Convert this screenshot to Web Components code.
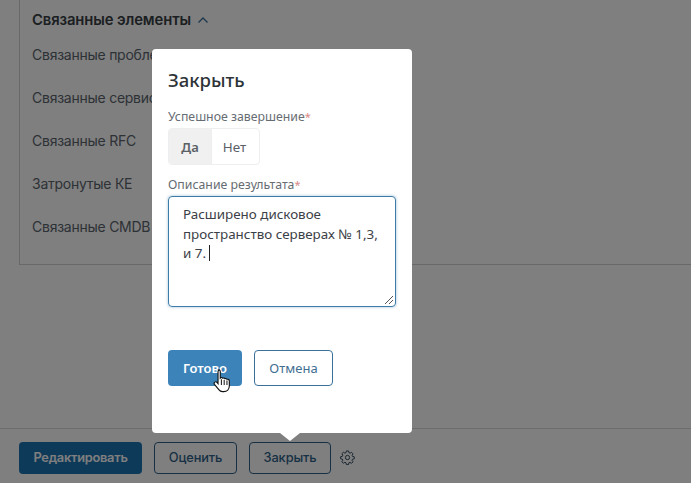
<!DOCTYPE html>
<html lang="ru"><head><meta charset="utf-8">
<style>
html,body{margin:0;padding:0;width:691px;height:483px;overflow:hidden;background:#fff}
body{font-family:Inter,"Liberation Sans",sans-serif}
</style></head><body>
<app-page>
  <related-panel title-text="Связанные элементы">
    <span>Связанные проблемы</span><span>Связанные сервисы</span><span>Связанные RFC</span><span>Затронутые КЕ</span><span>Связанные CMDB</span>
  </related-panel>
  <action-bar slot="footer">
    <ui-button variant="dark" w="123">Редактировать</ui-button>
    <ui-button variant="outline" w="83">Оценить</ui-button>
    <ui-button variant="outline" w="82">Закрыть</ui-button>
    <svg width="15" height="15" viewBox="0 0 24 24" fill="none" stroke="#2b4358" stroke-width="1.5" stroke-linejoin="round"><path d="M10.3 2.500h3.400l.6 2.800 1.700.8 2.500-1.400 2.300 2.400-1.500 2.400.7 1.800 2.800.6v3.300l-2.800.6-.8 1.700 1.600 2.400-2.400 2.400-2.400-1.500-1.800.7-.6 2.800h-3.400l-.6-2.800-1.800-.8-2.400 1.500-2.400-2.400 1.500-2.400-.7-1.700-2.800-.6v-3.400l2.800-.6.7-1.800-1.500-2.400 2.400-2.300 2.400 1.400 1.800-.8z" transform="translate(0 -1)"/><circle cx="12" cy="12" r="3.400"/></svg>
  </action-bar>
  <close-dialog slot="overlay"></close-dialog>
</app-page>
<script>
function def(name,css,html,init){
  customElements.define(name,class extends HTMLElement{
    constructor(){super();this.attachShadow({mode:'open'}).innerHTML='<style>'+css+'</style>'+html;}
    connectedCallback(){init&&init(this);}
  });
}
def('app-page',`
:host{display:flex;flex-direction:column;width:691px;height:483px;position:relative;overflow:hidden;background:#fff}
main{flex:1;padding:0 0 0 19px;min-height:0}
.scrim{position:absolute;inset:0;background:rgba(0,0,0,.5)}
.top{position:absolute;inset:0}
`,`<main><slot></slot></main><slot name="footer"></slot><div class="scrim"></div><div class="top"><slot name="overlay"></slot></div>`);

def('related-panel',`
:host{display:block;width:672px;height:265px;box-sizing:border-box;border-left:1px solid #cfd3d6;border-bottom:1px solid #cfd3d6;padding:10px 0 0 12px;font-family:Inter,"Liberation Sans",sans-serif}
h2{margin:0 0 15px;display:flex;align-items:center;gap:6px;font-size:14.800px;line-height:20px;font-weight:600;color:#383e44;letter-spacing:-.1px}
.list{display:flex;flex-direction:column;gap:23px}
::slotted(span){display:block;font-size:14px;line-height:20px;color:#5b646d;letter-spacing:-.25px;white-space:nowrap}
`,`<h2></h2><div class="list"><slot></slot></div>`,el=>{
  el.shadowRoot.querySelector('h2').innerHTML=el.getAttribute('title-text')+'<svg width="12" height="8" viewBox="0 0 12 8" fill="none" stroke="#3a6f98" stroke-width="1.300"><path d="M1.500 6.500L6 2l4.500 4.500"/></svg>';
});

def('action-bar',`
:host{display:flex;align-items:center;height:55px;box-sizing:border-box;border-top:1px solid #d5d8da;padding:3px 0 0 19px;gap:12px}
::slotted(svg){margin-left:-3px}
`,`<slot></slot>`);

def('ui-button',`
:host{display:inline-flex;align-items:center;justify-content:center;box-sizing:border-box;height:32px;border-radius:4px;font-size:12.800px;font-weight:500;white-space:nowrap;letter-spacing:-.1px;font-family:Inter,"Liberation Sans",sans-serif}
:host([variant=dark]){background:#1d74b5;color:#fff;font-weight:600;letter-spacing:-.25px}
:host([variant=outline]){border:1px solid #2f6188;color:#2f6188;background:#fff}
:host([variant=primary]){background:#3c83b9;color:#fff;font-weight:600;height:36px;font-size:13px;font-family:"Noto Sans",sans-serif;letter-spacing:0}
:host([variant=ghost]){border:1px solid #3a7199;color:#3f6f92;background:#fff;height:36px;font-size:13px;font-family:"Noto Sans",sans-serif;letter-spacing:0;font-weight:400}
`,`<slot></slot>`,el=>{el.style.width=el.getAttribute('w')+'px'});

def('close-dialog',`
:host{position:absolute;left:152px;top:49px;width:260px;height:384px;box-sizing:border-box;background:#fff;border-radius:4px;padding:18px 16px 0;display:flex;flex-direction:column;font-family:"Noto Sans",sans-serif;color:#333}
h1{margin:0 0 15px;font-size:18.500px;line-height:26px;font-weight:500;color:#2e3338}
label{display:block;font-size:12.300px;line-height:17px;color:#666c72;margin-bottom:3px}
label b{color:#d98886;font-weight:400;font-size:11px}
.seg{display:flex;width:92px;height:37px;box-sizing:border-box;border:1px solid #eceeef;border-radius:4px;overflow:hidden;font-size:13px;margin-bottom:11px}
.seg span{display:flex;align-items:center;justify-content:center;color:#5a6066}
.seg .on{width:42px;background:#f0f0f0;font-weight:600}
.seg .off{flex:1;border-left:1px solid #eceeef;padding-right:2px;font-size:13.400px}
.ta{width:228px;height:111px;box-sizing:border-box;border:1.500px solid #3d7ca8;border-radius:4px;box-shadow:0 0 3px rgba(61,124,168,.5);padding:8px 14px;font-size:13.400px;line-height:19.500px;color:#3c4147;position:relative}
.caret{display:inline-block;width:1px;height:16px;background:#222;vertical-align:-3px;margin-left:3px}
.grip{position:absolute;right:1px;bottom:1px}
.btns{display:flex;gap:12px;margin-top:43px}
.arrow{position:absolute;left:128px;top:384px;width:0;height:0;border:10px solid transparent;border-top-width:8px;border-bottom:0;border-top-color:#fff}
.cursor{position:absolute;left:61px;top:319px}
`,`<h1>Закрыть</h1>
<label>Успешное завершение<b>*</b></label>
<div class="seg"><span class="on">Да</span><span class="off">Нет</span></div>
<label>Описание результата<b>*</b></label>
<div class="ta">Расширено дисковое пространство серверах № 1,3, и 7.<span class="caret"></span>
<svg class="grip" width="10" height="10" viewBox="0 0 10 10" stroke="#555" fill="none"><path d="M1 9L9 1M5 9L9 5"/></svg></div>
<div class="btns"><ui-button variant="primary" w="74">Готово</ui-button><ui-button variant="ghost" w="79">Отмена</ui-button></div>
<div class="arrow"></div>
<svg class="cursor" width="19" height="26" viewBox="0 0 17 23"><path d="M5 1.500c.9 0 1.500.7 1.500 1.500v6l.5-.5c.7-.3 1.500 0 1.800.5.6-.4 1.500-.2 1.900.5.700-.4 1.500-.1 1.900.5.800-.3 2 .2 2 1.500v4.500c0 2.800-2 5-5 5H8.500c-1.500 0-2.500-.7-3.300-1.800L1.300 14.500c-.5-.8-.3-1.600.3-2 .7-.5 1.500-.3 2 .3l.9 1.100V3c0-.8.600-1.500 1.500-1.500z" fill="#fff" stroke="#111" stroke-width="1"/><path d="M7.500 10v5M10 10.500V15M12.500 11v4" stroke="#111" stroke-width=".9"/></svg>
`);
</script>
</body></html>
